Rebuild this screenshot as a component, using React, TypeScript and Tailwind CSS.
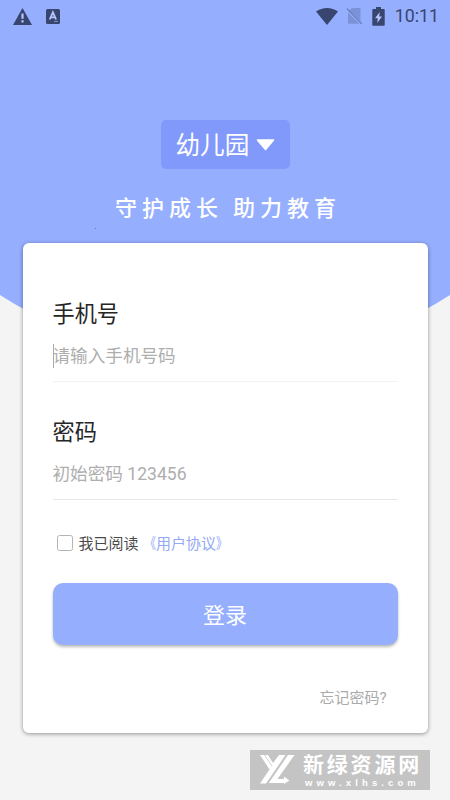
import React, { useState } from "react";

interface FieldProps {
  label: string;
  placeholder: string;
  type: string;
  focused?: boolean;
  className: string;
  lineClass: string;
}

const StatusBar: React.FC = () => (
  <div className="flex h-8 items-center justify-between pl-[13px] pr-[11px] text-[#38456e]">
    <div className="flex items-center gap-[14px]">
      <svg width="19" height="17" viewBox="0 0 19 17">
        <path d="M9.5 0 19 17H0Z" fill="currentColor" />
        <path d="M8.4 5.5h2.2v5.2H8.4zM8.4 12.3h2.2v2.2H8.4z" fill="#b5c6ff" />
      </svg>
      <svg width="14" height="15" viewBox="0 0 14 15">
        <rect width="14" height="15" rx="1.5" fill="currentColor" />
        <path
          d="M3.7 10.5 6.9 3.3l3.2 7.2M4.8 8.4h4.2"
          fill="none"
          stroke="#b5c6ff"
          strokeWidth="1.8"
        />
        <path d="M8 12.4h4" stroke="#8094d0" strokeWidth="1" />
      </svg>
    </div>
    <div className="flex items-center">
      <svg width="22" height="17" viewBox="0 0 22 17">
        <path d="M0 3.6C6.4-1.2 15.6-1.2 22 3.6L11 17Z" fill="currentColor" />
      </svg>
      <svg className="ml-[8px]" width="17" height="18" viewBox="0 0 17 18">
        <path
          d="M6 1h7.2c.8 0 1.3.5 1.3 1.3V14L3.4 3.4ZM2 5.2 13.7 16.8H3.3c-.8 0-1.3-.5-1.3-1.3Z"
          fill="#7c92d8"
        />
        <path d="M1 1.6 15.8 16.8" stroke="#6377b5" strokeWidth="1.2" />
      </svg>
      <svg className="ml-[9px]" width="13" height="19" viewBox="0 0 13 19">
        <path
          d="M4 0h5v2h2.6c.7 0 1.1.4 1.1 1.1v14.6c0 .7-.4 1.1-1.1 1.1H1.4c-.7 0-1.1-.4-1.1-1.1V3.1C.3 2.4.7 2 1.4 2H4Z"
          fill="currentColor"
        />
        <path d="M7.8 5 3 11.3h2.8L5.2 16 10 9.6H7.2Z" fill="#b5c6ff" />
      </svg>
      <span className="ml-[10px] text-[17.8px] leading-none font-['Roboto',sans-serif]">
        10:11
      </span>
    </div>
  </div>
);

const Field: React.FC<FieldProps> = ({
  label,
  placeholder,
  type,
  focused,
  className,
  lineClass,
}) => (
  <div className={`flex flex-col border-b ${className} ${lineClass}`}>
    <label className="mt-px text-[22.2px] leading-8 text-[#262626]">{label}</label>
    <div className="mt-[14px] flex h-6 items-center">
      {focused && <span className="-mr-px h-6 w-px shrink-0 bg-[#aaaaaa]" />}
      <input
        type={type}
        placeholder={placeholder}
        className="w-full bg-transparent text-[17.6px] leading-6 outline-none placeholder:text-[#aeaeae]"
      />
    </div>
  </div>
);

const Watermark: React.FC = () => (
  <div className="absolute left-[250px] top-[750px] flex h-10 w-[180px] bg-[#c4c4c4] text-white">
    <svg className="ml-[10px] mt-[5px] shrink-0" width="36" height="30" viewBox="0 0 36 30">
      <path d="M0 0h8l5 8L19 0h6.500L6 28.500H0L9.500 14.500Z" fill="currentColor" />
      <path d="M4.500 0 12 11" stroke="#c4c4c4" strokeWidth="0.8" />
      <path d="M28 0h6.500L17.500 24H24v-2.500l5.500 4-5.500 3.500v-1H8.800Z" fill="currentColor" />
    </svg>
    <div className="ml-[7px] flex flex-col">
      <span className="mt-[3px] whitespace-nowrap text-[21px] font-bold leading-[25px] tracking-[2.8px]">
        新绿资源网
      </span>
      <span className="ml-[2px] whitespace-nowrap text-[9.500px] font-bold leading-[9px] tracking-[4.100px] font-['Liberation_Sans',sans-serif]">
        www.xlhs.com
      </span>
    </div>
  </div>
);

const App: React.FC = () => {
  const [agreed, setAgreed] = useState(false);

  return (
    <div className="relative h-[800px] w-[450px] overflow-hidden bg-[#f4f4f4] font-['Roboto','Noto_Sans_CJK_SC',sans-serif]">
      {/* Curved header background */}
      <div className="absolute -left-[191px] -top-[471px] h-[832px] w-[832px] rounded-full bg-[#95aefe]" />

      <div className="relative flex flex-col">
        <StatusBar />

        {/* School type */}
        <button className="mx-auto mt-[88px] flex h-[49px] w-[129px] items-center rounded-[5px] bg-[#8199fb] pl-[15px] text-white">
          <span className="mt-[4px] text-[24.6px] leading-none">幼儿园</span>
          <svg className="ml-[7px]" width="19" height="12" viewBox="0 0 19 12">
            <path
              d="M1.500 1h16L9.500 10.500Z"
              fill="currentColor"
              stroke="currentColor"
              strokeWidth="1.600"
              strokeLinejoin="round"
            />
          </svg>
        </button>

        {/* Slogan */}
        <div className="mt-[24px] flex h-8 items-center pl-[115px] text-[22px] font-medium leading-8 tracking-[5px] text-white">
          <span>守护成长</span>
          <span className="ml-[10px]">助力教育</span>
        </div>

        {/* Login card */}
        <div className="mx-[22.500px] mt-[17.500px] flex h-[490px] flex-col rounded-[6px] bg-white px-[30px] shadow-[0_1px_4px_rgba(0,0,0,0.4)]">
          <Field
            label="手机号"
            placeholder="请输入手机号码"
            type="tel"
            focused
            className="mt-[54.500px] h-[85px]"
            lineClass="border-[#f3f3f3]"
          />
          <Field
            label="密码"
            placeholder="初始密码 123456"
            type="password"
            className="mt-[32.500px] h-[85px]"
            lineClass="border-[#e6e6e6]"
          />

          <div className="mt-[32.500px] flex h-6 items-center pl-[4px] text-[15px] text-[#4a4a4a]">
            <button
              aria-pressed={agreed}
              onClick={() => setAgreed(!agreed)}
              className={`-mt-[3px] h-[16px] w-[16px] rounded-[2.500px] border ${
                agreed ? "border-[#95aefe] bg-[#95aefe]" : "border-[#b4b4b4] bg-white"
              }`}
            />
            <span className="ml-[6px]">我已阅读</span>
            <span className="ml-[2.500px] flex text-[#93a9f5]">
              <span className="origin-right scale-x-75">《</span>
              <span>用户协议</span>
              <span className="origin-left scale-x-75">》</span>
            </span>
          </div>

          <button className="mt-[27px] h-[62px] shrink-0 rounded-[10px] bg-[#95aefe] pt-[2px] text-[22px] text-white shadow-[0_2px_3px_rgba(0,0,0,0.28)]">
            登录
          </button>

          <span className="mr-[11px] mt-[41px] self-end text-[15px] leading-6 text-[#aaaaaa]">
            忘记密码?
          </span>
        </div>
      </div>

      <span className="absolute left-[95px] top-[228px] h-px w-px bg-[#2596e8]" />
      <Watermark />
    </div>
  );
};

export default App;
